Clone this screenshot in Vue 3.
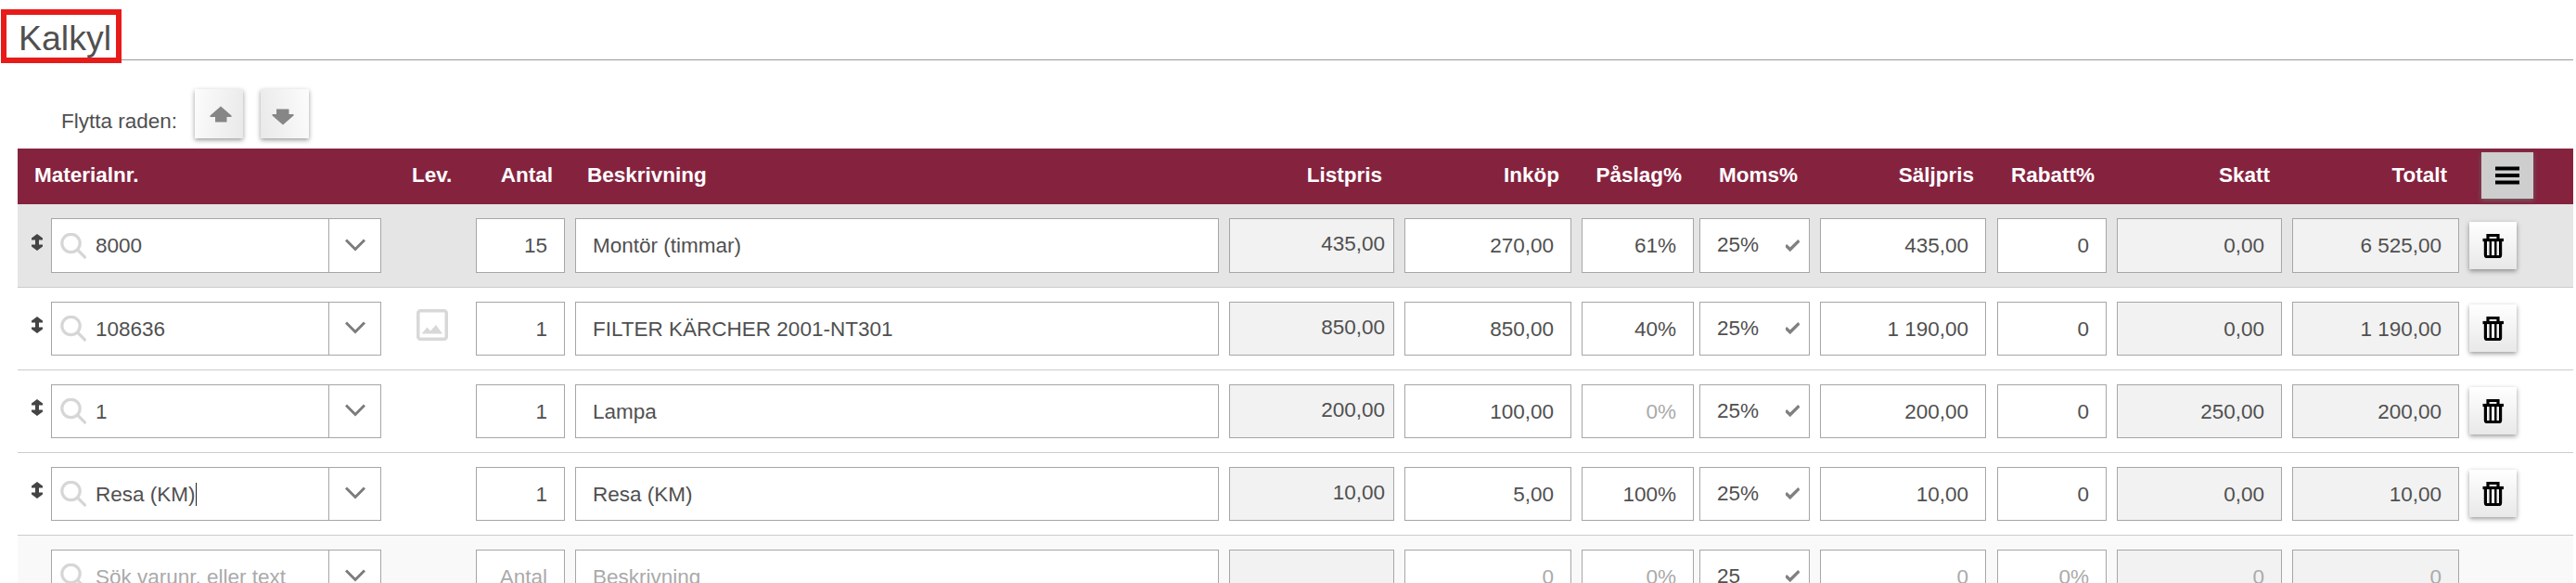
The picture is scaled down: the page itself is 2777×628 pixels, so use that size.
<template>
  <div class="calc">
    <header class="title-bar">
      <h1>Kalkyl</h1>
      <div class="highlight"></div>
    </header>

    <div class="toolbar">
      <span class="toolbar-label">Flytta raden:</span>
      <button class="btn move-btn up" type="button">
        <svg width="24" height="18" viewBox="0 0 24 18">
          <path d="M12 0.5 L23.5 10.5 V12 H18.5 V17.5 H6 V12 H0.5 V10.5 Z" />
        </svg>
      </button>
      <button class="btn move-btn down" type="button">
        <svg width="24" height="18" viewBox="0 0 24 18">
          <path d="M12 17.5 L23.5 7.5 V6 H18.5 V0.5 H5 V6 H0.5 V7.5 Z" />
        </svg>
      </button>
    </div>

    <div class="table">
      <div class="grid head">
        <div class="th first">Materialnr.</div>
        <div class="th lev">Lev.</div>
        <div
          v-for="col in columns"
          :key="col.key"
          class="th"
          :class="[col.key, col.key === 'text' ? 'left' : 'right']"
        >{{ col.label }}</div>
        <button class="btn menu-btn" type="button">
          <svg width="26" height="20" viewBox="0 0 26 20">
            <path d="M0 2.5 H26 M0 10 H26 M0 17.5 H26" />
          </svg>
        </button>
      </div>

      <div
        v-for="(row, i) in rows"
        :key="i"
        class="grid row"
        :class="{ active: i === 0, blank: row.blank }"
      >
        <div class="handle">
          <svg v-if="!row.blank" width="12" height="18" viewBox="0 0 12 18">
            <path d="M6 0 L12 4.5 V6.5 H8 V11.5 H12 V13.5 L6 18 L0 13.5 V11.5 H4 V6.5 H0 V4.5 Z" />
          </svg>
        </div>
        <div class="field material">
          <svg class="search" width="28" height="28" viewBox="0 0 28 28">
            <circle cx="11.5" cy="11" r="9.7" />
            <path d="M18.5 18 L27.5 27" />
          </svg>
          <span class="material-text" :class="{ caret: row.focused }">{{ row.material }}</span>
          <span class="dropdown">
            <svg width="22" height="14" viewBox="0 0 22 14">
              <path d="M1 1.5 L11 11.5 L21 1.5" />
            </svg>
          </span>
        </div>
        <div class="lev-icon">
          <svg v-if="row.image" width="34" height="34" viewBox="0 0 34 34">
            <rect x="1.75" y="1.75" width="30.5" height="30.5" rx="2.5" />
            <path d="M5.5 26.5 L11.5 19.5 L15 23.5 L21 17 L28 26.5 Z" />
          </svg>
        </div>
        <div
          v-for="col in columns"
          :key="col.key"
          class="field"
          :class="[col.key, { readonly: col.readonly, hint: isHint(row, col) }]"
        >
          <span>{{ row[col.key] }}</span>
          <svg v-if="col.key === 'vat'" class="check" width="15" height="13" viewBox="0 0 15 13">
            <path d="M0 6.2 L4.8 10.8 L14.5 1.2" />
          </svg>
        </div>
        <button v-if="!row.blank" class="btn trash-btn" type="button">
          <svg width="24" height="26" viewBox="0 0 24 26">
            <path d="M6 6 V1.5 H17 V6" />
            <path d="M0.5 6.5 H23" />
            <path d="M3.4 7 V23 Q3.4 24.5 4.9 24.5 H18.1 Q19.6 24.5 19.6 23 V7" />
            <path class="slats" d="M8.8 8 V24 M14.3 8 V24" />
          </svg>
        </button>
      </div>
    </div>
  </div>
</template>

<script setup>
const columns = [
  { key: 'qty', label: 'Antal' },
  { key: 'text', label: 'Beskrivning' },
  { key: 'list', label: 'Listpris', readonly: true },
  { key: 'cost', label: 'Inköp' },
  { key: 'markup', label: 'Påslag%' },
  { key: 'vat', label: 'Moms%' },
  { key: 'price', label: 'Säljpris' },
  { key: 'discount', label: 'Rabatt%' },
  { key: 'tax', label: 'Skatt', readonly: true },
  { key: 'total', label: 'Totalt', readonly: true }
]

const rows = [
  { material: '8000', qty: '15', text: 'Montör (timmar)', list: '435,00', cost: '270,00', markup: '61%', vat: '25%', price: '435,00', discount: '0', tax: '0,00', total: '6 525,00' },
  { material: '108636', image: true, qty: '1', text: 'FILTER KÄRCHER 2001-NT301', list: '850,00', cost: '850,00', markup: '40%', vat: '25%', price: '1 190,00', discount: '0', tax: '0,00', total: '1 190,00' },
  { material: '1', qty: '1', text: 'Lampa', list: '200,00', cost: '100,00', markup: '0%', vat: '25%', price: '200,00', discount: '0', tax: '250,00', total: '200,00' },
  { material: 'Resa (KM)', focused: true, qty: '1', text: 'Resa (KM)', list: '10,00', cost: '5,00', markup: '100%', vat: '25%', price: '10,00', discount: '0', tax: '0,00', total: '10,00' },
  { blank: true, material: 'Sök varunr. eller text', qty: 'Antal', text: 'Beskrivning', list: '', cost: '0', markup: '0%', vat: '25', price: '0', discount: '0%', tax: '0', total: '0' }
]

// placeholders are drawn in a lighter grey
const isHint = (row, col) =>
  (row.blank && col.key !== 'vat') || (col.key === 'markup' && row.markup === '0%')
</script>

<style>
body {
  background: #fff;
  overflow: hidden;
}
</style>

<style scoped>
.calc {
  height: 628px;
  overflow: hidden;
  font-family: "Liberation Sans", Arial, sans-serif;
  font-size: 22.5px;
  color: #505050;
}

.calc * {
  box-sizing: border-box;
}

.title-bar {
  position: relative;
  height: 65px;
  margin: 0 3px 0 19px;
  border-bottom: 1px solid #999;
}

h1 {
  margin: 0;
  padding: 20px 0 0 1px;
  font-size: 37.5px;
  font-weight: 400;
  line-height: 43px;
}

.highlight {
  position: absolute;
  left: -18px;
  top: 10px;
  width: 130px;
  height: 58px;
  border: 6px solid #e81b1b;
}

.toolbar {
  display: flex;
  align-items: flex-start;
  height: 95px;
  padding: 31px 0 0 66px;
}

.toolbar-label {
  width: 144px;
  padding-top: 22px;
  line-height: 26px;
}

.btn {
  display: flex;
  align-items: center;
  justify-content: center;
  padding: 0;
  border: none;
  background: linear-gradient(#fff, #e8e8e8);
  box-shadow: 0 2px 5px rgba(0, 0, 0, 0.4);
}

.move-btn {
  width: 52px;
  height: 53px;
  margin-right: 19px;
  background: linear-gradient(100deg, #fcfcfc, #e9e9e9);
}

.move-btn.down {
  background: linear-gradient(80deg, #e9e9e9, #fcfcfc);
}

.move-btn svg {
  fill: #868686;
}

.move-btn.up svg {
  margin: 0 0 0 4px;
}

.move-btn.down svg {
  margin: 6px 4px 0 0;
}

.table {
  width: 2755px;
  margin-left: 19px;
}

.grid {
  display: grid;
  grid-template-columns: 36px 356px 102px 107px 705px 189px 191px 127px 130px 191px 129px 189px 191px 112px;
  align-items: start;
}

.head {
  height: 60px;
  background: #85233f;
  color: #fff;
  font-weight: 700;
}

.th {
  line-height: 58px;
  white-space: nowrap;
}

.th.first {
  grid-column: 1 / 3;
  padding-left: 18px;
}

.th.lev {
  padding-left: 33px;
}

.th.left {
  padding-left: 13px;
}

.th.right {
  padding-right: 13px;
  text-align: right;
}

.row {
  height: 89px;
  border-bottom: 1px solid #ccc;
  background: #fff;
}

.row.active {
  height: 90px;
  background: #e5e5e5;
}

.row.blank {
  background: #f9f9f9;
}

.handle {
  padding: 31px 0 0 15px;
}

.active .handle {
  padding-top: 32px;
}

.handle svg {
  display: block;
  fill: #444;
}

.field {
  display: flex;
  align-items: center;
  justify-content: flex-end;
  height: 58px;
  margin-top: 15px;
  padding: 1px 18px 0;
  border: 1px solid #a6a6a6;
  background: #fff;
  white-space: nowrap;
}

.active .field {
  height: 59px;
}

/* box widths, the rest of each grid track is spacing */
.qty {
  width: 96px;
}

.text {
  width: 694px;
  justify-content: flex-start;
}

.list,
.tax {
  width: 178px;
}

.cost,
.total {
  width: 180px;
}

.markup {
  width: 121px;
}

.vat {
  width: 119px;
}

.price {
  width: 179px;
}

.discount {
  width: 118px;
}

.field.readonly {
  background: #f2f2f2;
}

.field.list {
  padding: 0 9px 3px 0;
}

.field.vat {
  justify-content: space-between;
  padding: 0 10px 1px 18px;
}

.field.hint {
  color: #aaa;
}

.field.material {
  padding: 0 0 0 9px;
}

.search {
  fill: none;
  stroke: #d6d6d6;
  stroke-width: 3.2;
}

.material-text {
  flex: 1;
  margin-left: 10px;
  padding-top: 1px;
}

.blank .material-text {
  color: #aaa;
}

.caret::after {
  content: "";
  display: inline-block;
  width: 1px;
  height: 25px;
  background: #222;
  vertical-align: -5px;
}

.dropdown {
  display: flex;
  align-items: center;
  align-self: stretch;
  width: 56px;
  padding: 0 0 2px 17px;
  border-left: 1px solid #a6a6a6;
}

.dropdown svg {
  fill: none;
  stroke: #7c7c7c;
  stroke-width: 3;
}

.lev-icon {
  padding: 23px 0 0 38px;
}

.lev-icon svg {
  display: block;
}

.lev-icon rect {
  fill: none;
  stroke: #d8d8d8;
  stroke-width: 3.5;
}

.lev-icon path {
  fill: #d8d8d8;
}

.check {
  fill: none;
  stroke: #808080;
  stroke-width: 3.4;
}

.menu-btn {
  width: 56px;
  height: 50px;
  margin: 4px 0 0 13px;
  background: #cecece;
  box-shadow: 0 2px 5px rgba(110, 110, 110, 0.8);
}

.menu-btn svg {
  stroke: #000;
  stroke-width: 4.2;
}

.trash-btn {
  width: 51px;
  height: 51px;
  margin-top: 18px;
}

.active .trash-btn {
  margin-top: 19px;
}

.trash-btn svg {
  fill: none;
  stroke: #000;
  stroke-width: 3.2;
}

.trash-btn .slats {
  stroke-width: 2.4;
}
</style>
